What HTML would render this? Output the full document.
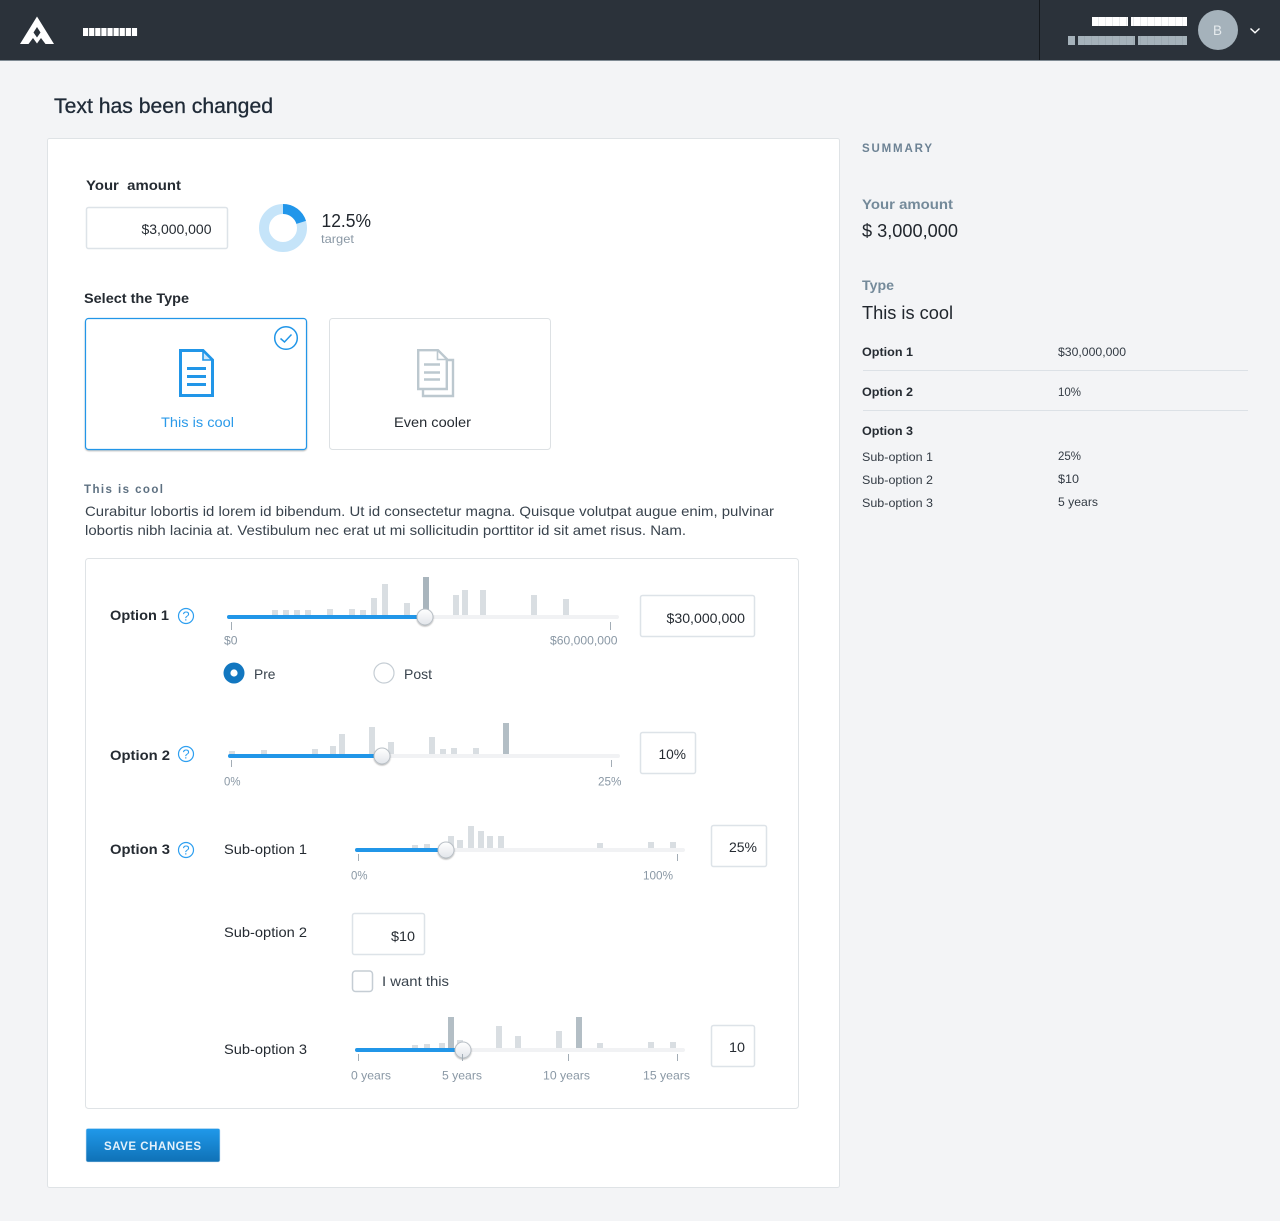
<!DOCTYPE html>
<html lang="en">
<head>
<meta charset="utf-8">
<title>Text has been changed</title>
<style>
html,body{margin:0;padding:0;background:#f3f4f6}
svg{display:block}
text{font-family:"Liberation Sans",sans-serif;fill:#252b32;font-size:14px;white-space:pre}
.b{font-weight:700}
.sm{font-size:12px;fill:#8a98a5}
.s12{font-size:12px;fill:#333b44}
.l{font-size:18px;fill:#20262d}
.g{fill:#748a9a;font-weight:700}
.bar{fill:#d9dee2}
.dk{fill:#b3bec5}
.trk{fill:#f1f2f4}
.fil{fill:#2196e8}
.tick{stroke:#a3adb6;stroke-width:1}
.box{fill:#fff;stroke:#dde3e8;stroke-width:1.5}
.help{fill:none;stroke:#2e9ff0;stroke-width:1.2}
.q{font-size:13px;fill:#2e9ff0;text-anchor:middle}
</style>
</head>
<body>
<svg width="1280" height="1221" viewBox="0 0 1280 1221" xmlns="http://www.w3.org/2000/svg">
<defs>
<linearGradient id="th" x1="0" y1="0" x2="0" y2="1"><stop offset="0" stop-color="#fff"/><stop offset="1" stop-color="#e2e5ea"/></linearGradient>
<linearGradient id="btn" x1="0" y1="0" x2="0" y2="1"><stop offset="0" stop-color="#2099ea"/><stop offset="1" stop-color="#0f71b6"/></linearGradient>
<filter id="sh" x="-40%" y="-40%" width="180%" height="180%"><feDropShadow dx="0" dy="1" stdDeviation="0.8" flood-color="#000" flood-opacity=".3"/></filter>
<pattern id="pw" x="83" y="0" width="6.11" height="10" patternUnits="userSpaceOnUse"><rect width="5.2" height="10" fill="#fff"/></pattern>
<pattern id="pw2" x="1092" y="0" width="7" height="10" patternUnits="userSpaceOnUse"><rect width="7" height="10" fill="#fff"/><rect x="6.6" width=".4" height="10" fill="#c9cdd0"/></pattern>
<pattern id="pg" x="1078" y="0" width="7" height="10" patternUnits="userSpaceOnUse"><rect width="7" height="10" fill="#a5b2ba"/><rect x="6.6" width=".4" height="10" fill="#8f9ca4"/></pattern>
</defs>

<rect width="1280" height="1221" fill="#f3f4f6"/>

<!-- header -->
<rect width="1280" height="60" fill="#2b323a"/>
<rect y="60" width="1280" height="1" fill="#7f8a93"/>
<path fill="#fff" fill-rule="evenodd" d="M37 16.5L54 44H45.5L41 38L37 43.5L33 38L28.5 44H20ZM37 27L33.5 32.5L37 37.5L40.5 32.5Z"/>
<rect x="83" y="28" width="55" height="8" fill="url(#pw)"/>
<rect x="1039" y="0" width="1" height="60" fill="#14181c"/>
<rect x="1092" y="17" width="36" height="9" fill="url(#pw2)"/>
<rect x="1131" y="17" width="56" height="9" fill="url(#pw2)"/>
<rect x="1068" y="36" width="7" height="9" fill="#a5b2ba"/>
<rect x="1078" y="36" width="57" height="9" fill="url(#pg)"/>
<rect x="1138" y="36" width="49" height="9" fill="url(#pg)"/>
<circle cx="1218" cy="30" r="20" fill="#a5b2bb"/>
<text x="1213" y="35" textLength="9" lengthAdjust="spacingAndGlyphs" style="fill:#e6ebee">B</text>
<path d="M1250.5 28.5L1255 32.8L1259.5 28.5" fill="none" stroke="#fff" stroke-width="1.4"/>

<!-- title -->
<text x="54" y="113" textLength="219" lengthAdjust="spacingAndGlyphs" style="font-size:21px;fill:#1f2a37;stroke:#1f2a37;stroke-width:.3">Text has been changed</text>

<!-- main card -->
<rect x="47.5" y="138.5" width="792" height="1049" rx="2" fill="#fff" stroke="#dfe3e6"/>

<text class="b" x="86" y="190" textLength="95" lengthAdjust="spacingAndGlyphs">Your  amount</text>
<rect class="box" x="86.5" y="207.5" width="141" height="41" rx="2"/>
<text x="141.5" y="234" textLength="70" lengthAdjust="spacingAndGlyphs">$3,000,000</text>

<circle cx="283" cy="228" r="19" fill="none" stroke="#c5e4f9" stroke-width="10"/>
<path d="M283 209A19 19 0 0 1 301.2 222.4" fill="none" stroke="#2196ea" stroke-width="10"/>
<text class="l" x="321.5" y="227" textLength="49.5" lengthAdjust="spacingAndGlyphs">12.5%</text>
<text class="sm" x="321" y="243" textLength="33" lengthAdjust="spacingAndGlyphs">target</text>

<text class="b" x="84" y="303" textLength="105" lengthAdjust="spacingAndGlyphs">Select the Type</text>

<!-- type cards -->
<rect x="85.5" y="318.5" width="221" height="131" rx="3" fill="#fff" stroke="#2196e8" stroke-width="1.2" filter="url(#sh)"/>
<circle cx="286" cy="338" r="11.3" fill="#fff" stroke="#2196e8" stroke-width="1.5"/>
<path d="M280.5 338.5L284.5 342L291.5 334.5" fill="none" stroke="#2196e8" stroke-width="1.5"/>
<path d="M180.5 350.5H203L212.5 360V395.5H180.5Z" fill="#fff" stroke="#2196e8" stroke-width="3"/>
<path d="M203 351V360H212Z" fill="#cfe8fa" stroke="#2196e8" stroke-width="1.6"/>
<path d="M187 368.5H206M187 376.5H206M187 384.5H206" stroke="#2196e8" stroke-width="3"/>
<text x="161" y="427" textLength="73" lengthAdjust="spacingAndGlyphs" style="fill:#2b9ae9">This is cool</text>

<rect x="329.5" y="318.5" width="221" height="131" rx="3" fill="#fff" stroke="#dde1e4"/>
<path d="M423 389V396H453V360H447" fill="#fff" stroke="#bcc8cf" stroke-width="2.4"/>
<path d="M418.2 350.2H438L446.8 359V389H418.2Z" fill="#fff" stroke="#bcc8cf" stroke-width="2.4"/>
<path d="M437.5 350.5V359.5H446.5" fill="none" stroke="#bcc8cf" stroke-width="1.6"/>
<path d="M424 364.5H440M424 372.5H440M424 379.5H440" stroke="#bcc8cf" stroke-width="2.4"/>
<text x="394" y="427" textLength="77" lengthAdjust="spacingAndGlyphs">Even cooler</text>

<text class="b" x="84" y="493" textLength="79" lengthAdjust="spacing" style="font-size:11.5px;fill:#5d7081">This is cool</text>
<text x="85" y="516" textLength="689" lengthAdjust="spacingAndGlyphs" style="fill:#39434d">Curabitur lobortis id lorem id bibendum. Ut id consectetur magna. Quisque volutpat augue enim, pulvinar</text>
<text x="85" y="535" textLength="601" lengthAdjust="spacingAndGlyphs" style="fill:#39434d">lobortis nibh lacinia at. Vestibulum nec erat ut mi sollicitudin porttitor id sit amet risus. Nam.</text>

<!-- options panel -->
<rect x="85.5" y="558.5" width="713" height="550" rx="3" fill="#fff" stroke="#dfe3e6"/>

<!-- Option 1 -->
<text class="b" x="110" y="620" textLength="59" lengthAdjust="spacingAndGlyphs">Option 1</text>
<circle class="help" cx="186" cy="616" r="7.5"/><text class="q" x="186" y="620.5">?</text>
<g class="bar">
<rect x="272" y="610" width="6" height="5"/><rect x="283" y="610" width="6" height="5"/><rect x="294" y="610" width="6" height="5"/><rect x="305" y="610" width="6" height="5"/><rect x="327" y="609" width="6" height="6"/><rect x="349" y="609" width="6" height="6"/><rect x="360" y="610" width="6" height="5"/><rect x="371" y="598" width="6" height="17"/><rect x="382" y="584" width="6" height="31"/><rect x="404" y="603" width="6" height="12"/><rect x="453" y="595" width="6" height="20"/><rect x="462" y="590" width="6" height="25"/><rect x="480" y="590" width="6" height="25"/><rect x="531" y="595" width="6" height="20"/><rect x="563" y="599" width="6" height="16"/>
</g>
<rect class="dk" x="423" y="577" width="6" height="38" style="fill:#a9b5bd"/>
<rect class="trk" x="227" y="615" width="392" height="4" rx="2"/>
<rect class="fil" x="227" y="615" width="198" height="4" rx="2"/>
<circle cx="425" cy="617" r="8" fill="url(#th)" stroke="#b9c0c6" filter="url(#sh)"/>
<path class="tick" d="M231.5 622V630M610.5 622V630"/>
<text class="sm" x="224" y="644.5" textLength="13.5" lengthAdjust="spacingAndGlyphs">$0</text>
<text class="sm" x="550" y="644.5" textLength="67.5" lengthAdjust="spacingAndGlyphs">$60,000,000</text>
<rect class="box" x="640.5" y="595.5" width="114" height="41" rx="2"/>
<text x="666.5" y="623" textLength="78.5" lengthAdjust="spacingAndGlyphs">$30,000,000</text>
<circle cx="234" cy="673" r="10.5" fill="#1277c0"/><circle cx="234" cy="673" r="3.6" fill="#fff"/>
<text x="254" y="679" textLength="21.5" lengthAdjust="spacingAndGlyphs" style="fill:#39434d">Pre</text>
<circle cx="384" cy="673" r="10" fill="#fff" stroke="#c5cdd4" stroke-width="1.2"/>
<text x="404" y="679" textLength="28" lengthAdjust="spacingAndGlyphs" style="fill:#39434d">Post</text>

<!-- Option 2 -->
<text class="b" x="110" y="760" textLength="60" lengthAdjust="spacingAndGlyphs">Option 2</text>
<circle class="help" cx="186" cy="754" r="7.5"/><text class="q" x="186" y="758.5">?</text>
<g class="bar">
<rect x="229" y="751" width="6" height="3"/><rect x="261" y="750" width="6" height="4"/><rect x="312" y="749" width="6" height="5"/><rect x="330" y="746" width="6" height="8"/><rect x="339" y="734" width="6" height="20"/><rect x="369" y="727" width="6" height="27"/><rect x="388" y="742" width="6" height="12"/><rect x="429" y="737" width="6" height="17"/><rect x="440" y="749" width="6" height="5"/><rect x="451" y="748" width="6" height="6"/><rect x="473" y="748" width="6" height="6"/>
</g>
<rect class="dk" x="503" y="723" width="6" height="31"/>
<rect class="trk" x="228" y="754" width="392" height="4" rx="2"/>
<rect class="fil" x="228" y="754" width="154" height="4" rx="2"/>
<circle cx="382" cy="756" r="8" fill="url(#th)" stroke="#b9c0c6" filter="url(#sh)"/>
<path class="tick" d="M231.5 760V767M611.5 760V767"/>
<text class="sm" x="224" y="785.5" textLength="16.5" lengthAdjust="spacingAndGlyphs">0%</text>
<text class="sm" x="598" y="785.5" textLength="23.5" lengthAdjust="spacingAndGlyphs">25%</text>
<rect class="box" x="640.5" y="732.5" width="55" height="41" rx="2"/>
<text x="658.5" y="759" textLength="27.5" lengthAdjust="spacingAndGlyphs">10%</text>

<!-- Option 3 -->
<text class="b" x="110" y="854" textLength="60" lengthAdjust="spacingAndGlyphs">Option 3</text>
<circle class="help" cx="186" cy="850" r="7.5"/><text class="q" x="186" y="854.5">?</text>
<text x="224" y="854" textLength="83" lengthAdjust="spacingAndGlyphs">Sub-option 1</text>
<g class="bar">
<rect x="412" y="845" width="6" height="3"/><rect x="424" y="844" width="6" height="4"/><rect x="448" y="836" width="6" height="12"/><rect x="457" y="840" width="6" height="8"/><rect x="468" y="826" width="6" height="22"/><rect x="478" y="831" width="6" height="17"/><rect x="487" y="836" width="6" height="12"/><rect x="498" y="836" width="6" height="12"/><rect x="597" y="843" width="6" height="5"/><rect x="648" y="842" width="6" height="6"/><rect x="670" y="842" width="6" height="6"/>
</g>
<rect class="trk" x="355" y="848" width="330" height="4" rx="2"/>
<rect class="fil" x="355" y="848" width="91" height="4" rx="2"/>
<circle cx="446" cy="850" r="8" fill="url(#th)" stroke="#b9c0c6" filter="url(#sh)"/>
<path class="tick" d="M358.5 854V861M677.5 854V861"/>
<text class="sm" x="351" y="879.5" textLength="16.5" lengthAdjust="spacingAndGlyphs">0%</text>
<text class="sm" x="643" y="879.5" textLength="30" lengthAdjust="spacingAndGlyphs">100%</text>
<rect class="box" x="711.5" y="825.5" width="55" height="41" rx="2"/>
<text x="729" y="852" textLength="28" lengthAdjust="spacingAndGlyphs">25%</text>

<text x="224" y="937" textLength="83" lengthAdjust="spacingAndGlyphs">Sub-option 2</text>
<rect class="box" x="352.5" y="913.5" width="72" height="41" rx="2"/>
<text x="391" y="941" textLength="24" lengthAdjust="spacingAndGlyphs">$10</text>
<rect x="352.5" y="971" width="20" height="20.5" rx="3" fill="#fff" stroke="#c5cdd4" stroke-width="1.5"/>
<text x="382" y="986" textLength="67" lengthAdjust="spacingAndGlyphs" style="fill:#39434d">I want this</text>

<text x="224" y="1054" textLength="83" lengthAdjust="spacingAndGlyphs">Sub-option 3</text>
<g class="bar">
<rect x="412" y="1045" width="6" height="3"/><rect x="424" y="1044" width="6" height="4"/><rect x="439" y="1043" width="6" height="5"/><rect x="457" y="1040" width="6" height="8"/><rect x="496" y="1026" width="6" height="22"/><rect x="515" y="1036" width="6" height="12"/><rect x="556" y="1031" width="6" height="17"/><rect x="597" y="1043" width="6" height="5"/><rect x="648" y="1042" width="6" height="6"/><rect x="670" y="1042" width="6" height="6"/>
</g>
<rect class="dk" x="448" y="1017" width="6" height="31"/>
<rect class="dk" x="576" y="1017" width="6" height="31"/>
<rect class="trk" x="355" y="1048" width="330" height="4" rx="2"/>
<rect class="fil" x="355" y="1048" width="108" height="4" rx="2"/>
<circle cx="463" cy="1050" r="8" fill="url(#th)" stroke="#b9c0c6" filter="url(#sh)"/>
<path class="tick" d="M358.5 1054V1061M462.5 1054V1061M568.5 1054V1061M677.5 1054V1061"/>
<text class="sm" x="351" y="1079.5" textLength="40" lengthAdjust="spacingAndGlyphs">0 years</text>
<text class="sm" x="442" y="1079.5" textLength="40" lengthAdjust="spacingAndGlyphs">5 years</text>
<text class="sm" x="543" y="1079.5" textLength="47" lengthAdjust="spacingAndGlyphs">10 years</text>
<text class="sm" x="643" y="1079.5" textLength="47" lengthAdjust="spacingAndGlyphs">15 years</text>
<rect class="box" x="711.5" y="1025.5" width="43" height="41" rx="2"/>
<text x="729" y="1052" textLength="16" lengthAdjust="spacingAndGlyphs">10</text>

<!-- button -->
<rect x="86" y="1128.5" width="134" height="33.5" rx="2" fill="url(#btn)" stroke="#cfe3f3" stroke-width=".6"/>
<text class="b" x="104" y="1150" textLength="97" lengthAdjust="spacing" style="font-size:11.5px;fill:#e3f1fb">SAVE CHANGES</text>

<!-- summary -->
<text class="b" x="862" y="152" textLength="70" lengthAdjust="spacing" style="font-size:11.5px;fill:#6c8294">SUMMARY</text>
<text class="g" x="862" y="209" textLength="91" lengthAdjust="spacingAndGlyphs">Your amount</text>
<text class="l" x="862" y="237" textLength="96" lengthAdjust="spacingAndGlyphs">$ 3,000,000</text>
<text class="g" x="862" y="290" textLength="32" lengthAdjust="spacingAndGlyphs">Type</text>
<text class="l" x="862" y="319" textLength="91" lengthAdjust="spacingAndGlyphs">This is cool</text>
<text class="b" x="862" y="356" textLength="51" lengthAdjust="spacingAndGlyphs" style="font-size:12px">Option 1</text>
<text class="s12" x="1058" y="356" textLength="68" lengthAdjust="spacingAndGlyphs">$30,000,000</text>
<rect x="863" y="370" width="385" height="1" fill="#dce1e6"/>
<text class="b" x="862" y="396" textLength="51" lengthAdjust="spacingAndGlyphs" style="font-size:12px">Option 2</text>
<text class="s12" x="1058" y="396" textLength="23" lengthAdjust="spacingAndGlyphs">10%</text>
<rect x="863" y="410" width="385" height="1" fill="#dce1e6"/>
<text class="b" x="862" y="435" textLength="51" lengthAdjust="spacingAndGlyphs" style="font-size:12px">Option 3</text>
<text class="s12" x="862" y="461" textLength="71" lengthAdjust="spacingAndGlyphs">Sub-option 1</text>
<text class="s12" x="1058" y="460" textLength="23" lengthAdjust="spacingAndGlyphs">25%</text>
<text class="s12" x="862" y="484" textLength="71" lengthAdjust="spacingAndGlyphs">Sub-option 2</text>
<text class="s12" x="1058" y="483" textLength="21" lengthAdjust="spacingAndGlyphs">$10</text>
<text class="s12" x="862" y="507" textLength="71" lengthAdjust="spacingAndGlyphs">Sub-option 3</text>
<text class="s12" x="1058" y="506" textLength="40" lengthAdjust="spacingAndGlyphs">5 years</text>
</svg>
</body>
</html>
